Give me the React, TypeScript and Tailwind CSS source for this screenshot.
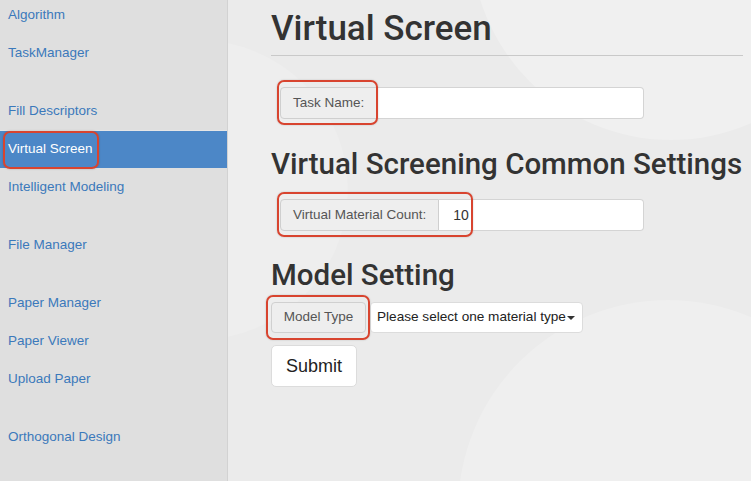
import React from 'react';

type NavItem = { label: string; active?: boolean; gapBefore?: boolean };

const navItems: NavItem[] = [
  { label: 'Algorithm' },
  { label: 'TaskManager' },
  { label: 'Fill Descriptors', gapBefore: true },
  { label: 'Virtual Screen', active: true },
  { label: 'Intelligent Modeling' },
  { label: 'File Manager', gapBefore: true },
  { label: 'Paper Manager', gapBefore: true },
  { label: 'Paper Viewer' },
  { label: 'Upload Paper' },
  { label: 'Orthogonal Design', gapBefore: true },
];

const Sidebar = () => (
  <aside className="w-[228px] shrink-0 bg-[#dfdfdf] border-r border-[#d2d2d2] overflow-hidden">
    <ul className="-mt-[4px]">
      {navItems.map(item => (
        <li key={item.label} className={item.gapBefore ? 'mt-[20px]' : ''}>
          <a
            href="#"
            className={
              item.active
                ? 'relative flex h-[38px] items-center pl-2 bg-[#4c87c7] text-white border-t border-[#e6e6e6]'
                : 'flex h-[38px] items-center pl-2 text-[#3b79bb]'
            }
          >
            {item.label}
            {item.active && (
              <span className="absolute left-[3px] top-0 h-[38px] w-[96px] rounded-[7px] border-2 border-[#d8442f] shadow-[0_0_2px_rgba(0,0,0,0.25)]" />
            )}
          </a>
        </li>
      ))}
    </ul>
  </aside>
);

const Highlight = ({ className }: { className: string }) => (
  <span className={`pointer-events-none absolute rounded-[7px] border-2 border-[#d8442f] shadow-[0_0_2px_rgba(0,0,0,0.2)] ${className}`} />
);

const headingFont = { fontFamily: 'Roboto, "Liberation Sans", sans-serif' };

export default function App() {
  return (
    <div
      className="flex h-[481px] w-[751px] overflow-hidden text-[13.5px]"
      style={{ fontFamily: '"Liberation Sans", Arial, sans-serif' }}
    >
      <Sidebar />

      <main className="relative flex-1 overflow-hidden bg-[#ebebeb] pl-[43px] pr-[8px]">
        {/* faint background circles */}
        <div className="pointer-events-none absolute -right-[120px] -top-[260px] h-[400px] w-[400px] rounded-full bg-white/25" />
        <div className="pointer-events-none absolute left-[230px] top-[300px] h-[420px] w-[420px] rounded-full bg-white/20" />
        <div className="pointer-events-none absolute -left-[180px] top-[40px] h-[300px] w-[300px] rounded-full bg-white/15" />

        <div className="relative">
          <h1
            style={headingFont}
            className="mt-[9px] border-b border-[#c9c9c9] pb-[6px] text-[35px] leading-[40px] font-medium text-[#333]"
          >
            Virtual Screen
          </h1>

          <div className="relative ml-[9px] mt-[31px] flex h-[32px] w-[364px]">
            <span className="flex items-center rounded-l-[4px] border border-[#cfcfcf] bg-[#eeeeee] px-[12px] text-[#555]">
              Task Name:
            </span>
            <input className="flex-1 rounded-r-[4px] border border-l-0 border-[#d4d4d4] bg-white px-3 outline-none" />
            <Highlight className="-left-[3px] -top-[7px] h-[45px] w-[101px]" />
          </div>

          <h2
            style={headingFont}
            className="mt-[29px] text-[29.5px] leading-[33px] font-medium text-[#333] whitespace-nowrap"
          >
            Virtual Screening Common Settings
          </h2>

          <div className="relative ml-[9px] mt-[18px] flex h-[32px] w-[364px]">
            <span className="flex items-center rounded-l-[4px] border border-[#cfcfcf] bg-[#eeeeee] px-[12px] text-[#555]">
              Virtual Material Count:
            </span>
            <input
              defaultValue="10"
              className="min-w-0 flex-1 rounded-r-[4px] border border-l-0 border-[#d4d4d4] bg-white pl-[14px] text-[14px] text-[#333] outline-none"
            />
            <Highlight className="-left-[3px] -top-[7px] h-[45px] w-[196px]" />
          </div>

          <h2 style={headingFont} className="mt-[28px] text-[29.5px] leading-[33px] font-medium text-[#333]">
            Model Setting
          </h2>

          <div className="relative mt-[10px] flex h-[31px] items-stretch gap-[4px]">
            <span className="flex w-[95px] items-center justify-center rounded-[4px] border border-[#d0d0d0] bg-[#eeeeee] text-[#555]">
              Model Type
            </span>
            <button className="flex w-[213px] items-center whitespace-nowrap rounded-[4px] border border-[#dcdcdc] bg-white pl-[6px] text-[13.6px] text-[#222]">
              Please select one material type
              <span className="ml-[1px] mt-[1px] h-0 w-0 border-x-[4px] border-t-[4px] border-x-transparent border-t-[#333]" />
            </button>
            <Highlight className="-left-[5px] -top-[7px] h-[45px] w-[104px]" />
          </div>

          <button className="mt-[12px] h-[42px] w-[86px] rounded-[5px] border border-[#dcdcdc] bg-white text-[18px] text-[#222]">
            Submit
          </button>
        </div>
      </main>
    </div>
  );
}
